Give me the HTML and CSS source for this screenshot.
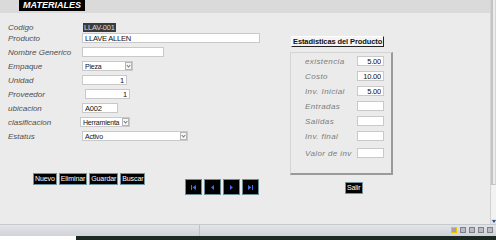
FILE: index.html
```html
<!DOCTYPE html>
<html lang="es">
<head>
    <meta charset="UTF-8">
    <title>Materiales</title>
    <link rel="stylesheet" href="styles.css">
</head>
<body>
    <div class="window">
        <div class="form-area">
            <header class="form-header">
                <div class="title">MATERIALES</div>
            </header>

            <div class="content">
                <div class="left">
                    <div class="fields">
                        <div class="row tight">
                            <label>Codigo</label>
                            <span class="selected">LLAV-001</span>
                        </div>
                        <div class="row">
                            <label>Producto</label>
                            <input class="w178" type="text" value="LLAVE ALLEN">
                        </div>
                        <div class="row">
                            <label>Nombre Generico</label>
                            <input class="w82" type="text" value="">
                        </div>
                        <div class="row">
                            <label>Empaque</label>
                            <div class="select w51"><span>Pieza</span><span class="arrow"></span></div>
                        </div>
                        <div class="row">
                            <label>Unidad</label>
                            <input class="w45 num" type="text" value="1">
                        </div>
                        <div class="row">
                            <label>Proveedor</label>
                            <input class="w45 num shift-r" type="text" value="1">
                        </div>
                        <div class="row">
                            <label>ubicacion</label>
                            <input class="w36" type="text" value="A002">
                        </div>
                        <div class="row">
                            <label>clasificacion</label>
                            <div class="select w50 shift-l"><span>Herramienta</span><span class="arrow"></span></div>
                        </div>
                        <div class="row">
                            <label>Estatus</label>
                            <div class="select w106"><span>Activo</span><span class="arrow"></span></div>
                        </div>
                    </div>

                    <div class="actions">
                        <div class="btn-group">
                            <button class="btn">Nuevo</button>
                            <button class="btn">Eliminar</button>
                            <button class="btn">Guardar</button>
                            <button class="btn">Buscar</button>
                        </div>
                        <div class="nav-group">
                            <button class="nav-btn">
                                <svg width="7" height="7" viewBox="0 0 7 7"><rect x="1" y="1" width="1" height="5" fill="#3d6fe0"/><path d="M6 1 L2.5 3.5 L6 6 Z" fill="#3d6fe0"/></svg>
                            </button>
                            <button class="nav-btn">
                                <svg width="7" height="7" viewBox="0 0 7 7"><path d="M5 1 L2 3.5 L5 6 Z" fill="#3d6fe0"/></svg>
                            </button>
                            <button class="nav-btn">
                                <svg width="7" height="7" viewBox="0 0 7 7"><path d="M2 1 L5 3.5 L2 6 Z" fill="#3d6fe0"/></svg>
                            </button>
                            <button class="nav-btn">
                                <svg width="7" height="7" viewBox="0 0 7 7"><path d="M1 1 L4.5 3.5 L1 6 Z" fill="#3d6fe0"/><rect x="5" y="1" width="1" height="5" fill="#3d6fe0"/></svg>
                            </button>
                        </div>
                    </div>
                </div>

                <div class="right">
                    <div class="stats-title">Estadisticas del Producto</div>
                    <div class="stats">
                        <div class="stat"><label>existencia</label><input class="num" type="text" value="5.00"></div>
                        <div class="stat"><label>Costo</label><input class="num" type="text" value="10.00"></div>
                        <div class="stat space-sm"><label>Inv. Inicial</label><input class="num" type="text" value="5.00"></div>
                        <div class="stat"><label>Entradas</label><input type="text" value=""></div>
                        <div class="stat"><label>Salidas</label><input type="text" value=""></div>
                        <div class="stat"><label>Inv. final</label><input type="text" value=""></div>
                        <div class="stat space-lg"><label>Valor de inv</label><input type="text" value=""></div>
                    </div>
                    <button class="btn salir">Salir</button>
                </div>
            </div>
        </div>

        <div class="vscroll">
            <div class="thumb"></div>
            <div class="down">
                <svg width="4" height="3" viewBox="0 0 4 3"><path d="M0 0 L4 0 L2 3 Z" fill="#2b4f86"/></svg>
            </div>
        </div>
    </div>

    <div class="statusbar">
        <div class="status-cell"></div>
        <div class="status-icons">
            <span class="sicon active"></span>
            <span class="sicon"></span>
            <span class="sicon"></span>
            <span class="sicon"></span>
            <span class="sicon"></span>
        </div>
    </div>

    <div class="taskbar">
        <div class="task-white"></div>
        <div class="task-dark"></div>
    </div>
</body>
</html>
```

FILE: styles.css
```css
* {
    box-sizing: border-box;
}

body {
    margin: 0;
    width: 496px;
    height: 240px;
    overflow: hidden;
    background-color: #ebebeb;
    font-family: "Liberation Sans", Arial, sans-serif;
    font-size: 8px;
    color: #111;
}

.window {
    display: flex;
    height: 224px;
}

.form-area {
    flex: 1;
    display: flex;
    flex-direction: column;
}

.form-header {
    height: 13px;
    background-color: #dadada;
    padding-left: 19px;
}

.title {
    display: inline-block;
    width: 66px;
    height: 11px;
    background-color: #000;
    color: #fff;
    font-weight: bold;
    font-style: italic;
    font-size: 9px;
    line-height: 11px;
    text-align: center;
}

.content {
    flex: 1;
    display: flex;
    padding: 9px 0 0 8px;
}

.left {
    width: 282px;
}

.fields {
    display: flex;
    flex-direction: column;
    gap: 4px;
}

.row {
    display: flex;
    align-items: center;
    height: 10px;
}

.row.tight {
    margin-bottom: -3px;
}

.row label {
    width: 74px;
    font-style: italic;
    color: #4e4e4e;
    font-size: 8px;
}

input {
    height: 10px;
    border: 1px solid #c9c9c9;
    background-color: #fff;
    font-family: "Liberation Sans", Arial, sans-serif;
    font-size: 7.5px;
    letter-spacing: -0.2px;
    padding: 0 2px;
    color: #111;
    outline: none;
}

input.num {
    text-align: right;
}

.w178 { width: 178px; }
.w82 { width: 82px; }
.w51 { width: 51px; }
.w50 { width: 50px; }
.w45 { width: 45px; }
.w36 { width: 36px; }
.w106 { width: 106px; }

.shift-r {
    margin-left: 3px;
}

.shift-l {
    margin-left: -2px;
}

.selected {
    margin-left: 1px;
    height: 9px;
    padding: 0 1px;
    background-color: #3b3b3b;
    color: #d8d8d8;
    font-size: 7.5px;
    letter-spacing: -0.2px;
    line-height: 9px;
}

.select {
    display: flex;
    align-items: center;
    height: 10px;
    border: 1px solid #c9c9c9;
    background-color: #fff;
    padding-left: 2px;
    font-size: 7px;
    letter-spacing: -0.2px;
    overflow: hidden;
}

.select span:first-child {
    flex: 1;
    white-space: nowrap;
}

.arrow {
    flex: none;
    position: relative;
    width: 7px;
    height: 8px;
    border: 1px solid #b5b5b5;
    background-color: #f7f7f7;
}

.arrow::after {
    content: "";
    position: absolute;
    left: 1px;
    top: 1px;
    width: 2px;
    height: 2px;
    border-right: 1px solid #777;
    border-bottom: 1px solid #777;
    transform: rotate(45deg);
}

.actions {
    display: flex;
    align-items: flex-start;
    margin-top: 32px;
    padding-left: 25px;
}

.btn-group {
    display: flex;
    gap: 2px;
    width: 116px;
}

.btn {
    height: 12px;
    padding: 0 1px;
    background-color: #000;
    color: #fff;
    border: 1px solid #6f95a0;
    font-family: "Liberation Sans", Arial, sans-serif;
    font-size: 7px;
    letter-spacing: -0.1px;
    line-height: 10px;
}

.nav-group {
    display: flex;
    gap: 2px;
    margin: 6px 0 0 36px;
}

.nav-btn {
    display: flex;
    align-items: center;
    justify-content: center;
    width: 17px;
    height: 16px;
    padding: 0;
    background-color: #000;
    border: 1px solid #6a8d98;
}

.right {
    width: 110px;
    padding-top: 14px;
    padding-left: 1px;
}

.stats-title {
    display: inline-block;
    height: 11px;
    padding: 0 1px;
    background-color: #f4f4f4;
    border: 1px solid #fff;
    border-right-color: #222;
    border-bottom-color: #222;
    font-weight: bold;
    font-size: 7.5px;
    letter-spacing: -0.1px;
    line-height: 9px;
    white-space: nowrap;
}

.stats {
    width: 103px;
    height: 123px;
    margin: 5px 0 0 -1px;
    padding: 3px 0 0 14px;
    border: 1px solid #d4d4d4;
    border-right: 2px solid #9a9a9a;
    border-bottom: 2px solid #9a9a9a;
    background-color: #ebebeb;
}

.stat {
    display: flex;
    align-items: center;
    height: 10px;
    margin-bottom: 5px;
}

.stat.space-sm {
    margin-top: 3px;
}

.stat.space-lg {
    margin-top: 7px;
}

.stat label {
    width: 52px;
    font-style: italic;
    color: #7c7c7c;
    letter-spacing: 0.4px;
    white-space: nowrap;
}

.stat input {
    width: 27px;
}

.salir {
    margin: 7px 0 0 54px;
    height: 12px;
}

.vscroll {
    position: relative;
    width: 6px;
    background-color: #f2f2f2;
    border-left: 1px solid #d2d2d2;
}

.thumb {
    height: 185px;
    border-left: 2px solid #c4c4c4;
    border-right: 1px solid #d6d6d6;
    border-bottom: 1px solid #c4c4c4;
    background-color: #ececec;
}

.down {
    position: absolute;
    left: 0;
    bottom: 0;
    width: 5px;
    height: 5px;
    display: flex;
    align-items: center;
    justify-content: center;
    background-color: #e4e4e4;
}

.statusbar {
    display: flex;
    height: 12px;
    border-top: 1px solid #c6c9cd;
    background: linear-gradient(#e2e4e7, #d0d3d7);
}

.status-cell {
    width: 200px;
    border-right: 1px solid #bfc2c6;
}

.status-icons {
    display: flex;
    gap: 3px;
    margin-left: auto;
    padding: 2px 3px 0 0;
}

.sicon {
    width: 6px;
    height: 6px;
    border: 1px solid #7c8088;
    background-color: #b8bcc2;
}

.sicon.active {
    border: 1px solid #f2c200;
    background-color: #9ea4ad;
}

.taskbar {
    display: flex;
    height: 4px;
}

.task-white {
    width: 76px;
    background-color: #fff;
}

.task-dark {
    flex: 1;
    background-color: #1c2822;
}
```
